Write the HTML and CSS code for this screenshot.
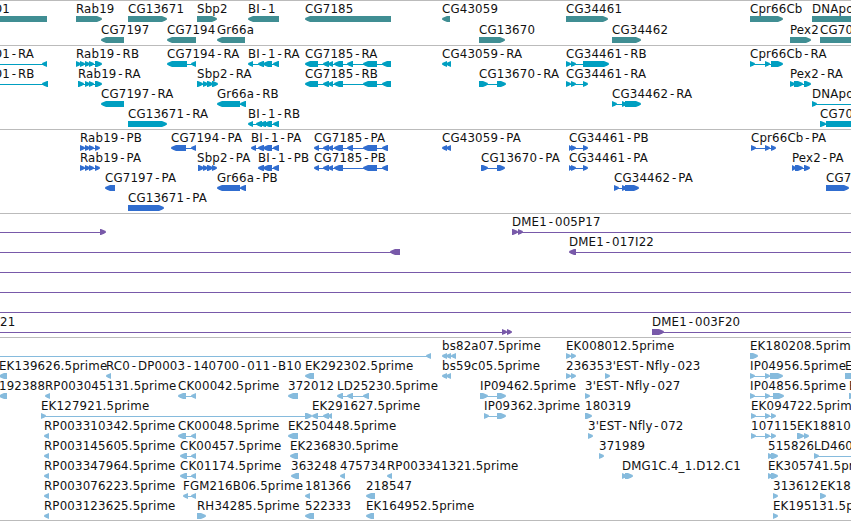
FILE: index.html
```html
<!DOCTYPE html>
<html lang="en">
<head>
    <meta charset="UTF-8">
    <meta name="viewport" content="width=device-width, initial-scale=1.0">
    <title>Genome Browser</title>
    <link rel="stylesheet" href="styles.css">
</head>
<body>
    <main class="browser">
        <section class="track genes" id="genes"></section>
        <section class="track transcripts" id="transcripts"></section>
        <section class="track proteins" id="proteins"></section>
        <section class="track clones" id="clones"></section>
        <section class="track ests" id="ests"></section>
    </main>

    <script src="tracks.js"></script>
</body>
</html>
```
FILE: styles.css
```css
body {
    margin: 0;
    background: #fff;
    overflow: hidden;
}

.browser {
    display: flex;
    flex-direction: column;
    border-bottom: 1px solid #bbb;
}

.track {
    box-sizing: border-box;
    border-top: 1px solid #bbb;
}

.track svg {
    display: block;
    width: 100%;
    height: 100%;
}

.track text {
    font-family: "DejaVu Sans", sans-serif;
    font-size: 11.8px;
    letter-spacing: 0.17px;
    fill: #111;
}

.genes {
    height: 45px;
    fill: #408e93;
}

.transcripts {
    height: 84px;
    fill: #009fc1;
}

.proteins {
    height: 84px;
    fill: #306dcf;
}

.clones {
    height: 124px;
    fill: #7859a9;
}

.ests {
    height: 183px;
    fill: #86bbdd;
}
```
FILE: tracks.js
```js
// feature: [label, strand, exons, label x (optional, default is feature start)]
const tracks = {
    genes: { pitch: 21, rows: [
        [
            ['D1', '-', [[-60, 47]], -7],
            ['Rab19', '+', [[76, 102]]],
            ['CG13671', '+', [[128, 167]]],
            ['Sbp2', '+', [[197, 217]]],
            ['BI-1', '-', [[248, 279]]],
            ['CG7185', '-', [[305, 391]]],
            ['CG43059', '-', [[442, 450]]],
            ['CG34461', '+', [[566, 608]]],
            ['Cpr66Cb', '+', [[750, 783]]],
            ['DNApol', '+', [[812, 900]]]
        ],
        [
            ['CG7197', '-', [[101, 124]]],
            ['CG7194', '-', [[167, 196]]],
            ['Gr66a', '-', [[217, 245]]],
            ['CG13670', '+', [[479, 505]]],
            ['CG34462', '+', [[612, 641]]],
            ['Pex2', '+', [[790, 811]]],
            ['CG70', '+', [[820, 900]]]
        ]
    ] },
    transcripts: { pitch: 20, rows: [
        [
            ['D1-RA', '-', [[-60, -50], [42, 47]], -7],
            ['Rab19-RB', '+', [[76, 81], [80, 85], [85, 90], [89, 94], [95, 102]]],
            ['CG7194-RA', '-', [[167, 187], [191, 196]]],
            ['BI-1-RA', '-', [[248, 253], [258, 264], [263, 272], [273, 279]]],
            ['CG7185-RA', '-', [[305, 318], [323, 329], [328, 333], [334, 343], [347, 353], [363, 377], [382, 391]]],
            ['CG43059-RA', '-', [[442, 447], [446, 451]]],
            ['CG34461-RB', '+', [[566, 571], [571, 576], [583, 609]]],
            ['Cpr66Cb-RA', '+', [[750, 755], [765, 770], [771, 783]]]
        ],
        [
            ['D1-RB', '-', [[-60, -50], [42, 48]], -7],
            ['Rab19-RA', '+', [[78, 84], [85, 90], [89, 94], [95, 102]]],
            ['Sbp2-RA', '+', [[197, 203], [203, 208], [207, 213], [212, 218]]],
            ['CG7185-RB', '-', [[305, 318], [323, 329], [328, 333], [334, 343], [363, 377], [382, 391]]],
            ['CG13670-RA', '+', [[479, 488], [497, 506]]],
            ['CG34461-RA', '+', [[566, 571], [571, 576], [583, 588]]],
            ['Pex2-RA', '+', [[790, 795], [794, 803], [804, 811]]]
        ],
        [
            ['CG7197-RA', '-', [[101, 124]]],
            ['Gr66a-RB', '-', [[217, 240], [240, 246]]],
            ['CG34462-RA', '+', [[612, 617], [622, 627], [625, 641]]],
            ['DNApol', '+', [[812, 817], [890, 900]]]
        ],
        [
            ['CG13671-RA', '+', [[128, 167]]],
            ['BI-1-RB', '-', [[248, 253], [256, 262], [260, 266], [264, 272], [273, 279]]],
            ['CG70', '+', [[820, 826], [826, 900]]]
        ]
    ] },
    proteins: { pitch: 20, rows: [
        [
            ['Rab19-PB', '+', [[80, 85], [85, 90], [89, 94], [95, 100]]],
            ['CG7194-PA', '-', [[171, 186], [191, 196]]],
            ['BI-1-PA', '-', [[251, 256], [258, 264], [263, 272], [273, 279]]],
            ['CG7185-PA', '-', [[314, 319], [323, 329], [328, 333], [334, 343], [347, 353], [363, 377], [382, 388]]],
            ['CG43059-PA', '-', [[442, 447], [446, 451]]],
            ['CG34461-PB', '+', [[569, 572], [571, 576], [583, 588]]],
            ['Cpr66Cb-PA', '+', [[751, 756], [765, 770], [771, 776]]]
        ],
        [
            ['Rab19-PA', '+', [[80, 85], [85, 90], [89, 94], [95, 100]]],
            ['Sbp2-PA', '+', [[198, 204], [203, 208], [207, 213], [212, 217]], 197],
            ['BI-1-PB', '-', [[258, 264], [263, 272], [273, 279]]],
            ['CG7185-PB', '-', [[314, 319], [323, 329], [328, 333], [334, 343], [363, 377], [382, 388]]],
            ['CG13670-PA', '+', [[481, 488], [497, 505]]],
            ['CG34461-PA', '+', [[569, 572], [571, 576], [583, 588]]],
            ['Pex2-PA', '+', [[792, 796], [795, 803], [804, 810]]]
        ],
        [
            ['CG7197-PA', '-', [[105, 115]]],
            ['Gr66a-PB', '-', [[217, 240], [240, 246]]],
            ['CG34462-PA', '+', [[614, 619], [622, 627], [625, 639]]],
            ['CG70', '+', [[826, 849]]]
        ],
        [
            ['CG13671-PA', '+', [[128, 164]]]
        ]
    ] },
    clones: { pitch: 20, rows: [
        [
            ['', '+', [[-60, -50], [100, 106]]],
            ['DME1-005P17', '+', [[512, 518], [518, 523], [890, 900]]]
        ],
        [
            ['', '-', [[-60, -50], [390, 400]]],
            ['DME1-017I22', '-', [[569, 576], [890, 900]]]
        ],
        [['', '+', [[-60, -50], [890, 900]]]],
        [['', '+', [[-60, -50], [890, 900]]]],
        [['', '+', [[-60, -50], [890, 900]]]],
        [
            ['21', '+', [[-60, -50], [502, 507], [507, 512]], 0],
            ['DME1-003F20', '+', [[652, 664], [890, 900]]]
        ]
    ] },
    ests: { pitch: 20, rows: [
        [
            ['', '-', [[-60, -50], [426, 431]]],
            ['bs82a07.5prime', '-', [[442, 447], [446, 451], [451, 456]]],
            ['EK008012.5prime', '+', [[566, 571], [571, 576]]],
            ['EK180208.5prime', '+', [[750, 758]]]
        ],
        [
            ['EK139626.5prime', '-', [[-1, 7]]],
            ['RC0-DP0003-140700-011-B10', '-', [[106, 111]]],
            ['EK292302.5prime', '-', [[305, 314]]],
            ['bs59c05.5prime', '-', [[442, 447], [446, 451]]],
            ['23635', '+', [[566, 571], [571, 576]]],
            ["3'EST-Nfly-023", '+', [[605, 610]]],
            ['IP04956.5prime', '+', [[750, 755], [765, 770], [770, 783]]],
            ['EK', '+', [[845, 870]]]
        ],
        [
            ['192388', '-', [[-1, 7]]],
            ['RP003045131.5prime', '-', [[45, 50]]],
            ['CK00042.5prime', '-', [[178, 186], [191, 196]]],
            ['372012', '-', [[288, 298]]],
            ['LD25230.5prime', '-', [[337, 343], [347, 353], [363, 369]]],
            ['IP09462.5prime', '+', [[480, 488], [497, 506]]],
            ["3'EST-Nfly-027", '+', [[585, 590]]],
            ['IP04856.5prime', '+', [[750, 755], [765, 770], [773, 784]]],
            ['EK', '+', [[849, 855]]]
        ],
        [
            ['EK127921.5prime', '+', [[41, 46], [305, 312]]],
            ['EK291627.5prime', '-', [[312, 318], [323, 329], [328, 332]]],
            ['IP09362.3prime', '+', [[484, 489], [497, 506]]],
            ['180319', '+', [[585, 592]]],
            ['EK094722.5prime', '+', [[751, 756], [765, 770], [771, 776]]]
        ],
        [
            ['RP003310342.5prime', '-', [[44, 49]]],
            ['CK00048.5prime', '-', [[178, 186], [191, 196]]],
            ['EK250448.5prime', '-', [[288, 298]]],
            ["3'EST-Nfly-072", '+', [[588, 593]]],
            ['107115', '+', [[751, 756], [765, 770], [771, 776]]],
            ['EK18810', '+', [[797, 804], [804, 809]]]
        ],
        [
            ['RP003145605.5prime', '-', [[44, 49]]],
            ['CK00457.5prime', '-', [[180, 187], [191, 196]]],
            ['EK236830.5prime', '-', [[290, 298]]],
            ['371989', '+', [[599, 604]]],
            ['515826', '+', [[768, 773], [771, 778]]],
            ['LD460', '+', [[814, 819], [890, 900]]]
        ],
        [
            ['RP003347964.5prime', '-', [[44, 49]]],
            ['CK01174.5prime', '-', [[180, 187], [191, 196]]],
            ['363248', '-', [[291, 299]]],
            ['475734', '-', [[340, 345]]],
            ['RP003341321.5prime', '-', [[387, 392]]],
            ['DMG1C.4_1.D12.C1', '+', [[622, 627], [625, 633]]],
            ['EK305741.5prime', '+', [[768, 773], [771, 778]]]
        ],
        [
            ['RP003076223.5prime', '-', [[44, 49]]],
            ['FGM216B06.5prime', '-', [[183, 188], [191, 196]]],
            ['181366', '-', [[305, 310]]],
            ['218547', '-', [[366, 375]]],
            ['313612', '+', [[773, 778]]],
            ['EK18', '+', [[820, 826]]]
        ],
        [
            ['RP003123625.5prime', '-', [[44, 49]]],
            ['RH34285.5prime', '+', [[197, 206]]],
            ['522333', '-', [[305, 314]]],
            ['EK164952.5prime', '-', [[366, 374]]],
            ['EK195131.5prime', '+', [[773, 778]]]
        ]
    ] }
};

// block with a blunt arrow head on the strand side
function exonPath(start, end, strand, y) {
    const tip = Math.min(5, end - start);
    const head = strand === '+' ? end : start;
    const tail = strand === '+' ? start : end;
    const d = strand === '+' ? -1 : 1;
    return `M${tail} ${y}H${head + d * tip}L${head + d * tip * 0.4} ${y + 1.2}L${head} ${y + 2.6}V${y + 3.6}` +
        `L${head + d * tip * 0.4} ${y + 4.8}L${head + d * tip} ${y + 6}H${tail}Z`;
}

function drawFeature([label, strand, exons, labelX], y) {
    const start = exons[0][0];
    const end = exons[exons.length - 1][1];
    let out = '';
    if (exons.length > 1) {
        out += `<rect x="${start + 1}" y="${y + 3}" width="${end - start - 2}" height="1"/>`;
    }
    exons.forEach(([a, b]) => {
        out += `<path d="${exonPath(a, b, strand, y)}"/>`;
    });
    // extra room on both sides of each dash
    const text = label.replace(/-(.)/g, '<tspan dx="1.8">-</tspan><tspan dx="1.8">$1</tspan>');
    out += `<text x="${labelX === undefined ? start : labelX}" y="${y - 3}">${text}</text>`;
    return out;
}

Object.keys(tracks).forEach((id) => {
    const { pitch, rows } = tracks[id];
    let out = '';
    rows.forEach((row, i) => {
        row.forEach((feature) => {
            out += drawFeature(feature, 15 + i * pitch);
        });
    });
    document.getElementById(id).innerHTML = `<svg>${out}</svg>`;
});
```
